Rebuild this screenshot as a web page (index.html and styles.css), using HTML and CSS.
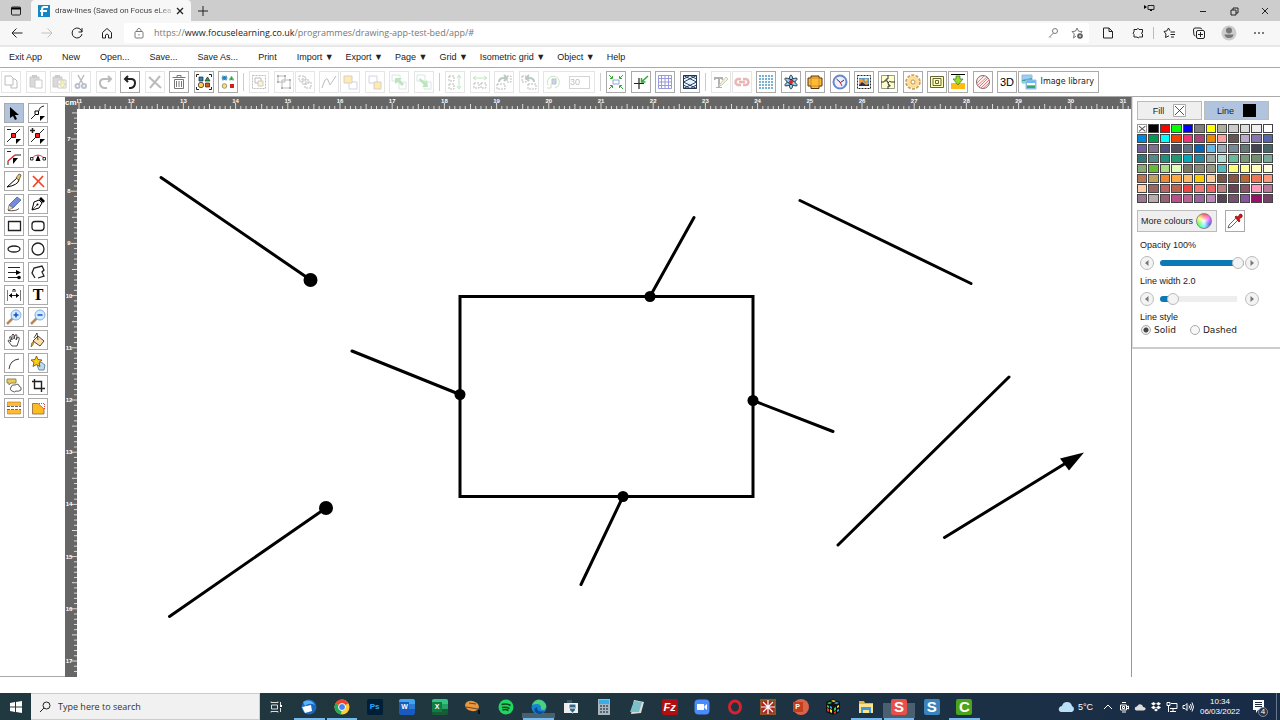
FILE: index.html
```html
<!DOCTYPE html>
<html lang="en">
<head>
<meta charset="utf-8">
<title>draw-lines (Saved on Focus eLearning)</title>
<link rel="stylesheet" href="styles.css">
</head>
<body>
<header class="browser">
  <div class="tabs">
    <button class="plain tab-actions" aria-label="Tab actions"><svg class="i12" viewBox="0 0 12 12"><rect x="1.5" y="2" width="9" height="8" rx="1" class="ln"/><path d="M1.5 2.5h9v2h-9z"/></svg></button>
    <div class="tab">
      <svg class="i12" viewBox="0 0 12 12"><path fill="#1687c4" d="M0 0h12v12H0z"/><path fill="none" stroke="#fff" stroke-width="2" d="M10 2H6Q4 2 4 5v6M2 6h7"/></svg>
      <span class="tab-title">draw-lines (Saved on Focus eLea</span>
      <button class="plain" aria-label="Close tab"><svg class="i8" viewBox="0 0 8 8"><path class="ln" stroke-width="1.3" d="M1 1l6 6M7 1l-6 6"/></svg></button>
    </div>
    <button class="plain new-tab" aria-label="New tab"><svg class="i12" viewBox="0 0 12 12"><path class="ln" d="M6 1v10M1 6h10"/></svg></button>
    <div class="window-controls">
      <svg class="i12 cast" viewBox="0 0 12 12"><path d="M1 4l3 2-3 2zM7 8h2v2H7z"/><path class="ln" d="M5 4.500h6v4H5z"/></svg>
      <button class="plain" aria-label="Minimise"><svg class="i12" viewBox="0 0 12 12"><path class="ln" d="M3 6.500h6"/></svg></button>
      <button class="plain" aria-label="Restore"><svg class="i12" viewBox="0 0 12 12"><path class="ln" d="M3 5h5v5H3zM5 5V3h5v5H8"/></svg></button>
      <button class="plain" aria-label="Close"><svg class="i12" viewBox="0 0 12 12"><path class="ln" d="M3 3l6 6M9 3L3 9"/></svg></button>
    </div>
  </div>
  <nav class="address-row" aria-label="Navigation">
    <div class="nav-buttons">
      <button class="plain" aria-label="Back"><svg class="i12" viewBox="0 0 12 12"><path class="ln" d="M11.500 6H1M5.500 1.500L1 6l4.500 4.500"/></svg></button>
      <button class="plain faded" aria-label="Forward" disabled><svg class="i12" viewBox="0 0 12 12"><path class="ln" d="M.5 6H11M6.500 1.500L11 6l-4.500 4.500"/></svg></button>
      <button class="plain" aria-label="Refresh"><svg class="i12" viewBox="0 0 12 12"><path class="ln" d="M11 5A5 5 0 1 0 11 7M11 1v4H7.500"/></svg></button>
      <button class="plain" aria-label="Home"><svg class="i12" viewBox="0 0 12 12"><path class="ln" d="M1.500 5.500L6 1.500l4.500 4v5.500H7.500V8q-1.500-2-3 0v3h-3z"/></svg></button>
    </div>
    <div class="address">
      <svg class="i12 dim" viewBox="0 0 12 12"><rect x="2" y="4.500" width="8" height="6.500" rx="1" class="ln"/><path class="ln" d="M4 4.500V3q2-3.500 4 0v1.500M6 7v1.500"/></svg>
      <a class="url" href="#">https://<span class="host">www.focuselearning.co.uk</span>/programmes/drawing-app-test-bed/app/#</a>
      <svg class="i12 dim" viewBox="0 0 12 12"><circle cx="8" cy="4" r="2.500" class="ln"/><path class="ln" d="M6.500 6L2 10.500M3 9.500l1 1"/></svg>
      <svg class="i12" viewBox="0 0 12 12"><path fill="none" stroke="#777" d="M5 9L2.500 11l.8-4L1 4.500l3.500-.3L6 1l1.500 3.200 3.500.3-1 1.500"/><circle cx="9" cy="9" r="2.800" fill="#555"/><path d="M7.700 9h2.600M9 7.700v2.600" stroke="#fff" stroke-width=".7"/></svg>
    </div>
    <div class="extras">
      <button class="plain" aria-label="Reader"><svg class="i12" viewBox="0 0 12 12"><path class="ln" d="M1.500 1H7l3.500 3.500V11h-9zM7 1v3.500h3.500"/></svg></button>
      <button class="plain" aria-label="Extensions"><svg class="i12" viewBox="0 0 12 12"><path class="ln" d="M2 2.500h3Q6 0 7 2.500h3.500v3Q8 6 10.500 7v3H7.500Q6 12 5 10H2V7.500Q0 6 2 5z"/></svg></button>
      <i class="rule"></i>
      <button class="plain" aria-label="Favourites"><svg class="i12" viewBox="0 0 12 12"><path class="ln" d="M7.500 5H12M7.500 7.500H12M8 10h3M7 3.800L5.500 1 4 3.800 1 4.500 3 7l-.5 3.500L6 8.800"/></svg></button>
      <button class="plain" aria-label="Collections"><svg class="i12" viewBox="0 0 12 12"><rect x="3.500" y="3.500" width="8" height="8" rx="1.500" class="ln"/><path class="ln" d="M2.500 9Q1 9 .8 7L.5 3Q.5 1 2 1h5q1.500 0 2 1.500M7.500 5v5M5 7.500h5"/></svg></button>
      <button class="plain" aria-label="Profile"><svg class="i16" viewBox="0 0 16 16"><circle cx="8" cy="8" r="7.500" fill="#ccc"/><circle cx="8" cy="5.500" r="3" fill="#777"/><path fill="#777" d="M3.500 9.500h9Q12 13 8 13T3.500 9.500z"/></svg></button>
      <button class="plain" aria-label="Settings and more"><svg class="i12" viewBox="0 0 12 12"><path d="M1 5.500h2v1H1zM5 5.500h2v1H5zM9 5.500h2v1H9z"/></svg></button>
    </div>
  </nav>
</header>

<nav class="menu" aria-label="Application menu">
  <button>Exit App</button><button>New</button><button>Open...</button><button>Save...</button><button>Save As...</button><button>Print</button>
  <button class="drop">Import ▼</button><button class="drop">Export ▼</button><button class="drop">Page ▼</button><button class="drop">Grid ▼</button><button class="drop">Isometric grid ▼</button><button class="drop">Object ▼</button><button>Help</button>
</nav>

<div class="toolbar" role="toolbar" aria-label="Edit tools">
  <div class="group group-edit">
    <button class="tool off" aria-label="Copy"><svg class="i16" viewBox="0 0 16 16"><path class="ln" d="M2 2h6l2 2v7H2zM8 11v3h6V7l-2-2h-2"/></svg></button>
    <button class="tool off" aria-label="Paste"><svg class="i16" viewBox="0 0 16 16"><path fill="#888" stroke="#555" d="M2 3h9v10H2z"/><path fill="#555" d="M4 1h5v3H4z"/><path fill="#fff" stroke="#555" d="M7 6h7v8H7z"/></svg></button>
    <div class="pair">
      <button class="tool off" aria-label="Paste in place"><svg class="i16" viewBox="0 0 16 16"><path fill="#888" stroke="#555" d="M1 3h9v10H1z"/><path fill="#555" d="M3 1h5v3H3z"/><path fill="#fff" stroke="#555" d="M6 6h8v8H6z"/><path fill="#dd2" stroke="#772" d="M9 6h3v4h2l-3.500 4L7 10h2z"/></svg></button>
      <button class="tool off" aria-label="Cut"><svg class="i16" viewBox="0 0 16 16"><path class="ln" stroke-width="1.500" d="M5 1l5 9M11 1L6 10"/><g fill="none" stroke="#236" stroke-width="2"><circle cx="4.500" cy="12" r="2"/><circle cx="11" cy="12" r="2"/></g></svg></button>
    </div>
    <button class="tool off" aria-label="Redo"><svg class="i16" viewBox="0 0 16 16"><path class="ln" stroke-width="2" d="M9 14H6Q2 13 2 9t4-4h7M10 2l3 3-3 3"/></svg></button>
    <button class="tool" aria-label="Undo"><svg class="i16" viewBox="0 0 16 16"><path class="ln" stroke-width="2" d="M7 14h2q4-1 4-5t-4-4H3M6 2L3 5l3 3"/></svg></button>
    <button class="tool off" aria-label="Delete"><svg class="i16" viewBox="0 0 16 16"><path class="ln" stroke-width="2" d="M2 3l12 11M13 2L3 14"/></svg></button>
    <button class="tool" aria-label="Clear all"><svg class="i16" viewBox="0 0 16 16"><path class="grey" d="M3.500 5.500h9v9h-9zM1.500 3.500h13M6 3V1.500h4V3M5.500 7v6M8 7v6M10.500 7v6"/></svg></button>
    <button class="tool" aria-label="Select all"><svg class="i16" viewBox="0 0 16 16"><path class="ln" d="M.5 3V.5H3M13 .5h2.500V3M15.500 13v2.500H13M3 15.500H.5V13"/><path fill="#28b" stroke="#222" stroke-width=".7" d="M3 3h4v4H3z"/><path fill="#2a4" stroke="#222" stroke-width=".7" d="M9 7h5l-2.500-4z"/><circle cx="5" cy="11" r="2.700" fill="#fc5" stroke="#222" stroke-width=".7"/><path fill="#d51" stroke="#222" stroke-width=".7" d="M9.500 9h4v4h-4z"/></svg></button>
    <button class="tool" aria-label="Deselect all"><svg class="i16" viewBox="0 0 16 16"><path fill="#28b" stroke="#9bc" stroke-dasharray="2 1" d="M2 2h5v4H2z"/><path fill="#2a4" stroke="#9b9" stroke-dasharray="2 1" d="M9 6h5l-2.500-4z"/><circle cx="4.500" cy="12" r="2.300" fill="#fd7" stroke="#997"/><path fill="#c22" d="M10 10h4v4h-4z"/></svg></button>
  </div>
  <i class="divider"></i>
  <div class="group group-arrange">
    <button class="tool off" aria-label="Group"><svg class="i16" viewBox="0 0 16 16"><path class="ln" d="M1.500 1.500h13v13h-13z" stroke-dasharray="2 1"/><path class="ln" d="M4 4h6v5H4z"/><path fill="#fd5" stroke="#555" d="M7 7h5v5H7z"/></svg></button>
    <div class="pair">
      <button class="tool off" aria-label="Ungroup"><svg class="i16" viewBox="0 0 16 16"><path class="ln" d="M2 2h7v6H2zM6 6h8v8H6z"/><path d="M1 1h2v2H1zM8 1h2v2H8zM1 7h2v2H1zM13 5h2v2h-2zM5 13h2v2H5zM13 13h2v2h-2z"/></svg></button>
      <button class="tool off" aria-label="Ungroup all"><svg class="i16" viewBox="0 0 16 16"><path class="ln" stroke-dasharray="2 1" d="M2 2h6v5H2zM5 5h6v5H5zM8 8h6v6H8z"/></svg></button>
    </div>
    <div class="pair">
      <button class="tool off" aria-label="Smooth"><svg class="i16" viewBox="0 0 16 16"><path class="ln" d="M1 14Q5 1 7 6t2 5 6-9"/></svg></button>
      <button class="tool off" aria-label="Bring to front"><svg class="i16" viewBox="0 0 16 16"><path fill="#fff" stroke="#67a" d="M7 8h8v7H7z"/><path fill="#fb1" stroke="#862" d="M2 2h8v7H2z"/></svg></button>
    </div>
    <button class="tool off" aria-label="Send to back"><svg class="i16" viewBox="0 0 16 16"><path fill="#fff" stroke="#67a" d="M2 2h8v7H2z"/><path fill="#fb1" stroke="#862" d="M7 8h7v7H7z"/></svg></button>
    <button class="tool off" aria-label="Forward one"><svg class="i16" viewBox="0 0 16 16"><path fill="#fff" stroke="#8ab" d="M1 1h8v6H1zM8 8h7v7H8z"/><path fill="#2a2" d="M4 4h7L9 6l4 4-2 2-4-4-3 2z"/></svg></button>
    <button class="tool off" aria-label="Back one"><svg class="i16" viewBox="0 0 16 16"><path fill="#fff" stroke="#8ab" d="M1 1h8v6H1zM8 8h7v7H8z"/><path fill="#2a2" d="M4 4l5 4 2-2 1 7H6l2-2-5-5z"/></svg></button>
  </div>
  <i class="divider"></i>
  <div class="group group-rotate">
    <button class="tool off" aria-label="Flip vertical"><svg class="i16" viewBox="0 0 16 16"><path class="ln" d="M2 2h5v5H2zM2 10h5v5H2z" stroke-dasharray="2 1"/><path class="green" d="M12 2v12M10 4l2-3 2 3M10 12l2 3 2-3"/></svg></button>
    <button class="tool off" aria-label="Flip horizontal"><svg class="i16" viewBox="0 0 16 16"><path class="ln" d="M2 9h5v5H2zM9 9h5v5H9z" stroke-dasharray="2 1"/><path class="green" d="M2 4h12M4 2L1 4l3 2M12 2l3 2-3 2"/></svg></button>
    <button class="tool off" aria-label="Rotate right"><svg class="i16" viewBox="0 0 16 16"><path class="ln" d="M1 10h8v5H1zM11 2h4v6h-4z" stroke-dasharray="2 1"/><path fill="none" stroke="#253" stroke-width="2" d="M3 8Q3 4 8 4h3M8 1l3 3-3 3"/></svg></button>
    <button class="tool off" aria-label="Rotate left"><svg class="i16" viewBox="0 0 16 16"><path class="ln" d="M7 10h8v5H7zM1 2h4v6H1z" stroke-dasharray="2 1"/><path fill="none" stroke="#253" stroke-width="2" d="M13 8q0-4-5-4H5M8 1L5 4l3 3"/></svg></button>
    <div class="rotate off"><svg class="i16" viewBox="0 0 16 16"><path class="green" d="M2 11A6 6 0 1 1 9 14M1 14h4v-4"/><path fill="#57b" stroke="#333" d="M6 5h4v5H6z"/></svg><input aria-label="Rotation angle" value="30" disabled></div>
  </div>
  <i class="divider"></i>
  <div class="group group-view">
    <button class="tool" aria-label="Fit to page"><svg class="i16" viewBox="0 0 16 16"><path fill="none" stroke="#8ad" d="M5 6h6v4H5z"/><path class="green" stroke-width="1" d="M1 1l3 3M4.500 2v2.500H2M15 1l-3 3M11.500 2v2.500H14M1 15l3-3M2 11.500h2.500V14M15 15l-3-3M14 11.500h-2.500V14"/></svg></button>
    <button class="tool" aria-label="Snap to point"><svg class="i16" viewBox="0 0 16 16"><path class="ln" stroke-width="1.200" d="M6 4v11M1 9.500h10"/><path class="green" stroke-width="1.500" d="M15 2L8.500 8M8.500 4v4h4"/></svg></button>
    <button class="tool" aria-label="Grid"><svg class="i16" viewBox="0 0 16 16"><path fill="none" stroke="#99d" d="M1.500 1.500h13v13h-13zM4.500 1v14M8 1v14M11.500 1v14M1 4.500h14M1 8h14M1 11.500h14"/></svg></button>
    <button class="tool" aria-label="Isometric grid"><svg class="i16" viewBox="0 0 16 16"><path fill="#e4f6fb" stroke="#235" d="M1.500 1.500h13v13h-13z"/><path fill="none" stroke="#235" stroke-width=".9" d="M1.500 1.500l13 6.500-13 6.500M14.500 1.500L1.500 8l13 6.500M1.500 5L8 1.500 14.500 5M1.500 11L8 14.500l6.500-3.500"/></svg></button>
  </div>
  <i class="divider"></i>
  <div class="group group-objects">
    <div class="pair">
      <button class="tool off" aria-label="Edit text"><svg class="i16" viewBox="0 0 16 16"><path d="M1 3h9v3H9L8 5H7v8h2v1H3v-1h2V5H3L2 6H1z"/><path fill="#dd7" stroke="#552" d="M7 10l6-7 2 2-6 6-3 1z"/></svg></button>
      <button class="tool off" aria-label="Link"><svg class="i16" viewBox="0 0 16 16"><path fill="none" stroke="#b11" stroke-width="2.500" d="M7 5H4.500a3 3 0 0 0 0 6H7M9 5h2.500a3 3 0 0 1 0 6H9M5 8h6"/></svg></button>
    </div>
    <button class="tool" aria-label="Dot grid"><svg class="i16" viewBox="0 0 16 16"><path fill="none" stroke="#7ab0d4" stroke-width="2" stroke-dasharray="2 1" d="M1 2h14M1 5h14M1 8h14M1 11h14M1 14h14"/></svg></button>
    <button class="tool" aria-label="Flower"><svg class="i16" viewBox="0 0 16 16"><g fill="#9cf" stroke="#122" stroke-width=".8"><ellipse cx="8" cy="8" rx="2" ry="7"/><ellipse cx="8" cy="8" rx="2" ry="7" transform="rotate(60 8 8)"/><ellipse cx="8" cy="8" rx="2" ry="7" transform="rotate(120 8 8)"/></g><circle cx="8" cy="8" r="2" fill="#d22"/></svg></button>
    <button class="tool" aria-label="Union"><svg class="i16" viewBox="0 0 16 16"><path fill="#fb3" stroke="#531" d="M4 2h8v2h3v8h-3v2.500H4V12H1V4h3z"/><path fill="none" stroke="#c83" d="M4 4h8v8H4z"/></svg></button>
    <button class="tool" aria-label="Clock"><svg class="i16" viewBox="0 0 16 16"><circle cx="8" cy="8" r="6.500" fill="#eef" stroke="#68c" stroke-width="2"/><path fill="none" stroke="#235" d="M4.500 5l4 3.500L12 6"/><path stroke="#d22" d="M8 8l2 4"/></svg></button>
    <button class="tool" aria-label="Picture"><svg class="i16" viewBox="0 0 16 16"><path class="ln" stroke-dasharray="2 1" d="M1.500 1.500h13v13h-13z"/><path fill="#59d" d="M3 4h10v8H3z"/><path fill="#f93" d="M3 5h3l3 4 2-1 2 2v2H3z"/><circle cx="10" cy="6" r="1.500" fill="#fc3"/><path fill="#235" d="M3 11l3-3 4 3 3-1v2H3z"/></svg></button>
    <button class="tool" aria-label="Jigsaw"><svg class="i16" viewBox="0 0 16 16"><path fill="#ffc" stroke="#998" d="M1.500 1.500h13v13h-13z"/><path class="ln" stroke-width=".9" d="M8 1v4q-3-1-2 2 2-1 2 2t2 2q1 2-2 1v3M1 8h3q0-2 2-1M8 9q2-3 3-1h4"/></svg></button>
    <button class="tool" aria-label="Gear"><svg class="i16" viewBox="0 0 16 16"><circle cx="8" cy="8" r="6.800" fill="none" stroke="#c9a25c" stroke-width="2" stroke-dasharray="3 1.300"/><circle cx="8" cy="8" r="6" fill="#fd9"/><circle cx="8" cy="8" r="2" fill="#fff" stroke="#b95"/></svg></button>
    <div class="pair">
      <button class="tool" aria-label="Offset"><svg class="i16" viewBox="0 0 16 16"><path fill="#ffb" stroke="#663" d="M1.500 2.500h13v11h-13zM4 4.500h8v7H4zM6.500 6.500h3v3h-3z"/></svg></button>
      <button class="tool" aria-label="Download"><svg class="i16" viewBox="0 0 16 16"><path d="M1 0h14v1H1z"/><path fill="#fb1" d="M1 9h14v6H1z"/><path fill="#9d2" stroke="#372" stroke-width=".7" d="M6 2h4v3h3l-5 6-5-6h3z"/></svg></button>
    </div>
    <button class="tool" aria-label="Hatching"><svg class="i16" viewBox="0 0 16 16"><circle cx="8" cy="8" r="6.500" fill="#fee" stroke="#866"/><path stroke="#d77" stroke-width=".9" d="M2 9l7-7M3 11l9-8M4 13l9-9M6 14l8-8M8 14.500L14 9"/></svg></button>
    <div class="pair">
      <button class="tool three">3D</button>
      <button class="tool library"><svg class="i16" viewBox="0 0 16 16"><path fill="#9cf" stroke="#9bc" d="M1 1h10v8H1z"/><path fill="#3a8" d="M1 6l10-2v3H1z"/><path fill="#6bf" stroke="#abc" d="M5 6h10v9H5z"/><path fill="#fff" d="M6 9h8v2H6z"/><path fill="#3a6" d="M6 12h8v2H6z"/></svg>Image library</button>
    </div>
  </div>
</div>

<main class="workspace">
  <aside class="tools" aria-label="Drawing tools">
    <div class="tool-grid">
    <button class="tool selected" aria-label="Select"><svg class="i16" viewBox="0 0 16 16"><path d="M4 2l9 8H9l2 4-2 1-2-4-3 2z"/></svg></button>
    <button class="tool" aria-label="Edit points"><svg class="i16" viewBox="0 0 16 16"><path class="ln" d="M1 14l4-4M9 6q0-4 5-5"/><path fill="#fff" stroke="#000" d="M5 6h3.500v3.500H5z"/><path d="M10 11h5l-5 5z"/></svg></button>
    <button class="tool" aria-label="Remove point"><svg class="i16" viewBox="0 0 16 16"><path class="ln" d="M1 14l5-5M9 6l5-5M1 1.500h4"/><path fill="#e22" stroke="#500" d="M5.500 5.500h4v4h-4z"/><path d="M10 11h5l-5 5z"/></svg></button>
    <button class="tool" aria-label="Add point"><svg class="i16" viewBox="0 0 16 16"><path class="ln" d="M1 14l5-5M9 6l5-5"/><path class="ln" stroke-width="1.500" d="M0 2.500h5M2.500 0v5"/><path fill="#e22" stroke="#500" d="M5.500 5.500h4v4h-4z"/><path d="M10 11h5l-5 5z"/></svg></button>
    <button class="tool" aria-label="Remove segment"><svg class="i16" viewBox="0 0 16 16"><path class="ln" d="M1 1.500h4M2 15v-4M9 5h6"/><path stroke="#d22" stroke-width="1.500" d="M2 11l7-6"/><path d="M7 8h5l-5 6z"/></svg></button>
    <button class="tool" aria-label="Curve segment"><svg class="i16" viewBox="0 0 16 16"><path fill="none" stroke="#e44" d="M2 8q6-6 12 0"/><path fill="#fff" stroke="#000" stroke-width=".8" d="M.5 7.500H3V10H.5zM13 7.500h2.500V10H13z"/><path d="M8 5l2.500 6h-5z"/></svg></button>
    <button class="tool" aria-label="Knife"><svg class="i16" viewBox="0 0 16 16"><path fill="#fff" stroke="#000" d="M1 14L11 5l2 2q-1 5-12 7z"/><path fill="#ec7" stroke="#542" stroke-width=".8" d="M10 5l3-4 2 1-2 5z"/></svg></button>
    <button class="tool" aria-label="Delete shape"><svg class="i16" viewBox="0 0 16 16"><path stroke="#e42" stroke-width="1.700" d="M3 3l11 11M13 3L3 14"/></svg></button>
    <button class="tool" aria-label="Pencil"><svg class="i16" viewBox="0 0 16 16"><path fill="#78d" stroke="#469" stroke-width=".8" d="M3 9l8-8 4 3-8 8z"/><path fill="#fdb" stroke="#654" stroke-width=".6" d="M3 9l4 3-5 2z"/><path class="ln" stroke-width=".8" d="M2 14.500q8 1 11-2"/></svg></button>
    <button class="tool" aria-label="Pen"><svg class="i16" viewBox="0 0 16 16"><path fill="#fff" stroke="#000" d="M2 14l2-8 5-2 3 3-3 5z"/><path d="M9 3l2-2 4 4-2 2z"/><path class="ln" stroke-width=".7" d="M2 14l5-5"/><circle cx="7.500" cy="8.500" r="1"/></svg></button>
    <button class="tool" aria-label="Rectangle"><svg class="i16" viewBox="0 0 16 16"><path class="ln" stroke-width="1.300" d="M2.500 3.500h12v9h-12z"/></svg></button>
    <button class="tool" aria-label="Rounded rectangle"><svg class="i16" viewBox="0 0 16 16"><rect class="ln" stroke-width="1.300" x="2" y="3.500" width="12" height="9" rx="3"/></svg></button>
    <button class="tool" aria-label="Ellipse"><svg class="i16" viewBox="0 0 16 16"><ellipse class="ln" stroke-width="1.300" cx="8" cy="8" rx="6" ry="3"/></svg></button>
    <button class="tool" aria-label="Circle"><svg class="i16" viewBox="0 0 16 16"><circle class="ln" stroke-width="1.300" cx="8" cy="8" r="6"/></svg></button>
    <button class="tool" aria-label="Line"><svg class="i16" viewBox="0 0 16 16"><path class="ln" d="M2 3.500h12M2 8.500h8M2 13.500h10"/><path d="M10 6l5 2.500-5 2.500z"/><circle cx="13" cy="13.500" r="1.800"/></svg></button>
    <button class="tool" aria-label="Polygon"><svg class="i16" viewBox="0 0 16 16"><path class="ln" stroke-width="1.300" d="M5 14L2 9l2-5 8-2 2 4-2 2 2 4-6 2"/></svg></button>
    <button class="tool" aria-label="Dimension"><svg class="i16" viewBox="0 0 16 16"><path class="grey" d="M1.500 3v11M14.500 3v11"/><path class="ln" d="M3 8.500h10M7 5V2.500h2V5"/><path d="M6 6v5L3 8.500zM10 6v5l3-2.500z"/></svg></button>
    <button class="tool text-tool" aria-label="Text">T</button>
    <button class="tool" aria-label="Zoom in"><svg class="i16" viewBox="0 0 16 16"><path stroke="#b85" stroke-width="2.500" d="M6.500 9.500L1 15"/><circle cx="10" cy="6" r="5" fill="#cef" stroke="#8ad"/><path class="blue" d="M7.500 6h5M10 3.500v5"/></svg></button>
    <button class="tool" aria-label="Zoom out"><svg class="i16" viewBox="0 0 16 16"><path stroke="#b85" stroke-width="2.500" d="M6.500 9.500L1 15"/><circle cx="10" cy="6" r="5" fill="#cef" stroke="#8ad"/><path class="blue" d="M7.500 6h5"/></svg></button>
    <button class="tool" aria-label="Pan"><svg class="i16" viewBox="0 0 16 16"><path class="ln" stroke-width=".8" d="M6 14l-4-5q0-2 3 1L3.500 5q1-2 2.500 3V3q1-2 2 0v4l1-4q2-1 2 1l-1 4 2-3q2 0 1 3l-2 6z"/></svg></button>
    <button class="tool" aria-label="Fill"><svg class="i16" viewBox="0 0 16 16"><path fill="#fda" stroke="#431" stroke-width=".9" d="M8 4l6 5-4 5-7-5z"/><path class="ln" stroke-width=".8" d="M8 8L7 1 4 6"/><path fill="#da3" stroke="#431" stroke-width=".5" d="M1 15q0-5 3-6l-1 4z"/></svg></button>
    <button class="tool" aria-label="Arc"><svg class="i16" viewBox="0 0 16 16"><path class="ln" stroke-width=".9" d="M3 14Q4 5 13 4"/></svg></button>
    <button class="tool" aria-label="Shapes"><svg class="i16" viewBox="0 0 16 16"><path fill="#bde" stroke="#68a" d="M11 7l4 3-1 5H9l-2-5z"/><path fill="#fc1" stroke="#642" stroke-width=".8" d="M6.500 1L8 4.500l4 .5-3 2.500 1 4-3.500-2-3.500 2 1-4L1 5l4-.5z"/></svg></button>
    <button class="tool" aria-label="Callouts"><svg class="i16" viewBox="0 0 16 16"><path fill="#eec85a" stroke="#885" d="M1 2h9v4H5L3 8V6H1z"/><path fill="#fff" stroke="#333" stroke-width=".8" d="M6 14q-3-1-1-4 1-3 4-2 4-2 4 1 3 1 2 4-3 2-5 1-1 2-4 0z"/></svg></button>
    <button class="tool" aria-label="Crop"><svg class="i16" viewBox="0 0 16 16"><path class="ln" stroke-width="1.400" d="M2 4.500h9.500V15M4.500 2v9.500H15"/></svg></button>
    <button class="tool" aria-label="Cut across"><svg class="i16" viewBox="0 0 16 16"><path fill="#fb3" stroke="#a73" stroke-width=".6" d="M1.500 2h13v12h-13z"/><path fill="#fff" d="M1 6h14v4H1z"/><path fill="none" stroke="#666" stroke-dasharray="3 1" d="M1 6.500h14M1 9.500h14"/></svg></button>
    <button class="tool" aria-label="Chamfer"><svg class="i16" viewBox="0 0 16 16"><path fill="#fb2" stroke="#863" stroke-width=".8" d="M2.500 3.500H8L14 9v5H2.500z"/><path fill="none" stroke="#d44" stroke-dasharray="1 1" d="M9 3.500h5.500V9"/></svg></button>
    </div>
  </aside>

  <section class="drawing" aria-label="Drawing page">
    <div class="ruler-top"><span class="unit">cm</span><svg id="ruler-x"></svg></div>
    <div class="sheet-row">
      <svg id="ruler-y"></svg>
      <svg class="sheet" role="img" aria-label="Lines and a rectangle">
        <g transform="translate(-77 -109)" class="shapes">
          <path d="M460 296.500h293v200H460zM161 177.500l149 102M169.500 616.500L326 508M694 217.500l-44 79M352 351l108 43.500M753 400.500l80 31M581 584.500l42-88M800 200.500l171 83M838 545l171-168M944.500 537.500L1066 463"/>
          <path class="solid" d="M1084 452.500l-24 6 9 12z"/>
          <g class="solid"><circle cx="310.500" cy="280" r="7"/><circle cx="326" cy="508" r="7"/><circle cx="650" cy="296.500" r="5.500"/><circle cx="460" cy="394.500" r="5.500"/><circle cx="753" cy="400.500" r="5.500"/><circle cx="623" cy="496.500" r="5.500"/></g>
        </g>
      </svg>
    </div>
  </section>

  <aside class="side">
    <div class="panel">
      <div class="modes">
        <button>Fill<svg class="mode-chip" viewBox="0 0 13 13"><path fill="#fff" stroke="#aaa" d="M.5.5h12v12H.5z"/><path class="ln" stroke-width=".8" d="M2 2l9 9M11 2l-9 9"/></svg></button>
        <button class="selected">Line<svg class="mode-chip" viewBox="0 0 13 13"><path d="M0 0h13v13H0z"/></svg></button>
      </div>
      <div class="swatches" id="swatches"></div>
      <div class="more">
        <button class="more-button">More colours<i class="wheel"></i></button>
        <button class="picker" aria-label="Pick colour"><svg class="i16" viewBox="0 0 16 16"><path fill="#fff" stroke="#444" stroke-width=".8" d="M1 15l1-3 7-7 2 2-7 7z"/><path fill="#d11" stroke="#811" stroke-width=".8" d="M8 4l1-1 2 1 2-3q3 0 2 3l-3 2 1 2-1 1z"/></svg></button>
      </div>
      <label for="opacity">Opacity 100%</label>
      <div class="slider">
        <button class="step" aria-label="Less opacity"><svg viewBox="0 0 6 6"><path fill="#777" d="M4.500 0v6L1 3z"/></svg></button>
        <input class="full" id="opacity" type="range" min="0" max="100" value="100">
        <button class="step" aria-label="More opacity"><svg viewBox="0 0 6 6"><path fill="#777" d="M1.500 0v6L5 3z"/></svg></button>
      </div>
      <label for="width">Line width 2.0</label>
      <div class="slider">
        <button class="step" aria-label="Thinner"><svg viewBox="0 0 6 6"><path fill="#777" d="M4.500 0v6L1 3z"/></svg></button>
        <input class="low" id="width" type="range" min="0" max="20" value="2">
        <button class="step" aria-label="Thicker"><svg viewBox="0 0 6 6"><path fill="#777" d="M1.500 0v6L5 3z"/></svg></button>
      </div>
      <div class="style-title" id="style-title">Line style</div>
      <div class="radios" role="radiogroup" aria-labelledby="style-title">
        <label><input type="radio" name="dash" checked>Solid</label>
        <label><input type="radio" name="dash">Dashed</label>
      </div>
    </div>
  </aside>
</main>

<footer class="taskbar">
  <button class="plain start" aria-label="Start"><svg class="i12" viewBox="0 0 12 12"><path fill="#fff" d="M0 2l5-1v4.500H0zM6 1l6-1v5.500H6zM0 6.500h5V11l-5-1zM6 6.500h6V12l-6-1z"/></svg></button>
  <div class="search">
    <svg class="i12" viewBox="0 0 12 12"><circle class="ln" cx="7.500" cy="4.500" r="3.500"/><path class="ln" d="M5 7L1 11"/></svg>
    <input type="text" aria-label="Search" placeholder="Type here to search">
  </div>
  <div class="apps">
    <button class="app" aria-label="Task view"><svg class="i12" viewBox="0 0 12 12"><path fill="none" stroke="#ddd" d="M1 1.500V.5M1 1.500h7V.5M1.500 4h6v4h-6zM1 11.500v-1h7v1M10.500 1v3M10.500 7v4"/><path fill="#fff" d="M10 4h2v2h-2z"/></svg></button>
    <button class="app open" aria-label="Thunderbird"><svg class="i16" viewBox="0 0 16 16"><circle cx="8" cy="8" r="7.500" fill="#1d66c1"/><path fill="#5bb5f5" d="M2 3q7-4 12 3-6-3-10 1z"/><path fill="#fff" d="M1 8l9-2 1 6-7 2z"/></svg></button>
    <button class="app open" aria-label="Chrome"><svg class="i16" viewBox="0 0 16 16"><circle cx="8" cy="8" r="7.500" fill="#fc3"/><path fill="#e43" d="M8 8L1.500 4.300A7.500 7.500 0 0 1 14.500 4.300z"/><path fill="#2a5" d="M8 8l-6.500-3.700A7.500 7.500 0 0 0 7 15.400z"/><circle cx="8" cy="8" r="3.500" fill="#48e" stroke="#fff"/></svg></button>
    <button class="app" aria-label="Photoshop"><span class="logo ps">Ps</span></button>
    <button class="app" aria-label="Word"><span class="logo word"><b>W</b></span></button>
    <button class="app" aria-label="Excel"><span class="logo excel"><b>X</b></span></button>
    <button class="app" aria-label="Editor"><svg class="i16" viewBox="0 0 16 16"><ellipse cx="7" cy="7" rx="7" ry="5" fill="#e9983d" transform="rotate(15 7 7)"/><path stroke="#643" fill="none" d="M1 8l12 2M4 4l7 1"/><path stroke="#111" stroke-width="2" d="M14 11v4"/></svg></button>
    <button class="app" aria-label="Spotify"><svg class="i16" viewBox="0 0 16 16"><circle cx="8" cy="8" r="7.500" fill="#1ed760"/><path fill="none" stroke="#142" stroke-width="1.500" d="M3.500 5.500q5-1.500 9 1M4 8.500q4-1 7.500 1M4.500 11q3-1 6 .5"/></svg></button>
    <button class="app open current-edge" aria-label="Edge"><svg class="i16" viewBox="0 0 16 16"><circle cx="8" cy="8" r="7.500" fill="#1683d5"/><path fill="#4bd07b" d="M1 6Q5-2 12 2q6 5 1 9-4 0-3-3Q9 3 1 6z"/><path fill="#0d4b93" d="M6 8q0 6 8 4-4 5-9 2-4-4 1-6z"/></svg></button>
    <button class="app" aria-label="Security"><svg class="i16" viewBox="0 0 16 16"><path fill="#eee" d="M1 4h14v10H1z"/><path fill="#456" d="M4 1h5v3H4z"/><path fill="#368" stroke="#fff" d="M6 5h7v4q0 3-3.500 5Q6 12 6 9z"/><path stroke="#fff" d="M7 9h5"/></svg></button>
    <button class="app" aria-label="Calculator"><svg class="i16" viewBox="0 0 16 16"><path fill="#aab5bd" d="M2 0h12v16H2z"/><path fill="#38aee8" d="M3 1h10v4H3z"/><path stroke="#567" stroke-width="2" stroke-dasharray="2 1" d="M4 7h9M4 10h9M4 13h9"/></svg></button>
    <button class="app" aria-label="Notes"><svg class="i16" viewBox="0 0 16 16"><path fill="#ddd" d="M5 1l10 2-3 11-10 1z"/><path fill="#7bbfc9" d="M5 2l8 1-3 10H1z"/></svg></button>
    <button class="app" aria-label="FileZilla"><span class="logo fz">Fz</span></button>
    <button class="app" aria-label="Zoom"><svg class="i16" viewBox="0 0 16 16"><rect x=".5" y=".5" width="15" height="15" rx="4" fill="#4a8cff"/><path fill="#fff" d="M3 5h7v6H3zM10.500 7L13 5v6l-2.500-2z"/></svg></button>
    <button class="app" aria-label="Opera"><svg class="i16" viewBox="0 0 16 16"><ellipse cx="8" cy="8" rx="5.500" ry="6" fill="none" stroke="#d8232e" stroke-width="3"/></svg></button>
    <button class="app" aria-label="Snowflake"><svg class="i16" viewBox="0 0 16 16"><path fill="#852" d="M0 0h16v16H0z"/><path fill="#a22" d="M2 2h12v12H2z"/><path stroke="#fff" stroke-width="1.200" d="M8 1v14M1 8h14M3 3l10 10M13 3L3 13"/></svg></button>
    <button class="app" aria-label="PowerPoint"><span class="logo ppt"><b>P</b></span></button>
    <button class="app" aria-label="Cube"><svg class="i16" viewBox="0 0 16 16"><path fill="#111" d="M8 0l7 3v10l-7 3-7-3V3z"/><path fill="#3c5" d="M2 4l3-1 2 1-3 1zM2 6l2 1v2L2 8zM9 9l2-1v3l-2 1z"/><path fill="#fd3" d="M8 1l3 1-2 1-3-1zM5 10l2 1v3l-2-1zM12 7l2-1v2l-2 1z"/><path fill="#3ae" d="M5 7l2 1v2L5 9zM12 11l2-1v2l-2 1zM9 4l3-1 2 1-3 1z"/><path fill="#e33" d="M2 9l2 1v3l-2-1zM9 13l2-1v2l-2 1z"/></svg></button>
    <button class="app open" aria-label="File Explorer"><svg class="i16" viewBox="0 0 16 16"><path fill="#e8b33b" d="M1 2h5l1 2h8v10H1z"/><path fill="#ffe28a" d="M1 5h14v9H1z"/><path fill="#3a9be0" d="M3 8h10v6h-2v-3H5v3H3z"/></svg></button>
    <button class="app open current" aria-label="Snagit"><span class="logo snag">S</span></button>
    <button class="app" aria-label="Snagit Editor"><span class="logo snag-blue">S</span></button>
    <button class="app open" aria-label="Camtasia"><span class="logo cam">C</span></button>
  </div>
  <div class="tray">
    <svg class="i16" viewBox="0 0 16 16"><path fill="#b9e0f7" d="M3 13q-3-1-2-4 1-2 3-2 1-4 5-4t5 4q2 1 2 3t-2 3z"/></svg>
    <span class="temp">5°C</span>
    <svg class="i12" viewBox="0 0 12 12"><path class="lw" d="M2 8l4-4 4 4"/></svg>
    <svg class="i12" viewBox="0 0 12 12"><path class="lw" d="M4 1.500h4M4 11h4M2.500 4h6v5h-6zM8.500 6l2-1v3l-2-1M4.500 5.500h2v2h-2z"/></svg>
    <svg class="i12" viewBox="0 0 12 12"><path fill="#ddd" d="M2 9.500q-2-1-1-3 1-1 2-1Q5 2 8 4q1 1 1 2 3 0 2.500 2.500l-1.500 1z"/></svg>
    <svg class="i12" viewBox="0 0 12 12"><path fill="#fff" d="M3.500 1L6 2.800 3.500 4.500 1 2.800zM8.500 1L11 2.800 8.500 4.500 6 2.800zM3.500 4.800L6 6.500 3.500 8.300 1 6.500zM8.500 4.800L11 6.500 8.500 8.300 6 6.500zM6 7.500l2 1.500-2 1.500L4 9z"/></svg>
    <svg class="i12" viewBox="0 0 12 12"><path class="lw" d="M5 2.500h6v5H4M7 8v2M4 10.500h6M1 1.500h3v3H1zM2.500 4.500V11"/></svg>
    <svg class="i12" viewBox="0 0 12 12"><path class="lw" d="M1 4.500h2l2-2v7l-2-2H1zM7 4.500q1 1.500 0 3M8.500 3q2 3 0 6M10 1.500q3 4.500 0 9"/></svg>
    <time class="clock"><span>10:34</span><span>06/03/2022</span></time>
    <button class="plain notes" aria-label="4 notifications"><svg class="i16" viewBox="0 0 16 16"><path fill="#fff" d="M2 1h11v10H7l-2 3v-3H2z"/><path stroke="#1a2a42" d="M4 3.500h7M4 5.500h7M4 7.500h7"/></svg><span class="count">4</span></button>
  </div>
</footer>
<script src="app.js"></script>
</body>
</html>
```
FILE: app.js
```js
const NS = 'http://www.w3.org/2000/svg';
const CM = 52.2;

function add(parent, name, attrs, text) {
  const node = document.createElementNS(NS, name);
  for (const key in attrs) node.setAttribute(key, attrs[key]);
  if (text) node.textContent = text;
  parent.appendChild(node);
}

function ruler(id, first, offset, last, vertical) {
  const svg = document.getElementById(id);
  let d = '';
  for (let n = -10; n <= (last - first) * 10 + 2; n++) {
    const p = offset + n * CM / 10;
    if (p < 0) continue;
    const len = n % 10 === 0 ? 6 : n % 5 === 0 ? 5 : 3;
    d += vertical ? `M12 ${p}h${-len}` : `M${p} 12v${-len}`;
  }
  add(svg, 'path', { d });
  for (let c = first; c <= last; c++) {
    const p = offset + (c - first) * CM;
    add(svg, 'text', vertical ? { x: 4, y: p + 2 } : { x: p, y: 6 }, String(c));
  }
}
ruler('ruler-x', 11, 2, 31, false);
ruler('ruler-y', 7, 30, 17, true);

const colours = `none 000 f00 0f0 00f 808080 ff0 b0b0a0 ccc ddd eee fff
08d 095 0ff e40 e37 a47 e80 ff9f9f 655 bac 87a 56a
7060a0 807090 505080 505060 607080 06b 6be 9ab 789 677 445 466
377 588 229080 229970 0ab 2288a0 99aaa0 b0ddd0 6b9 797 709070 7a9
8a7 6b3 ad8 dfb 776 887 999980 5bb ff7 ff9 ffb ffd
b75 c0a060 e83 fa4 fb6 fc0 fc9 754 854 b63 e75 f97
fca 966 b66 b65 e44 e77 e66 bb8080 645 856 f9b b79
997790 bbaab0 996077 bb5088 bb6090 9a60a0 b8b 545 775070 8855a0 916 774066`.split(/\s+/);
const box = document.getElementById('swatches');
for (const c of colours) {
  const b = document.createElement('button');
  b.setAttribute('aria-label', c === 'none' ? 'No colour' : '#' + c);
  if (c === 'none') {
    b.className = 'none';
    b.innerHTML = '<svg viewBox="0 0 8 7"><path stroke="#555" d="M1 1l6 5M7 1L1 6"/></svg>';
  } else b.style.background = '#' + c;
  box.appendChild(b);
}
```
FILE: styles.css
```css
* { box-sizing: border-box; }
body {
  margin: 0;
  height: 100vh;
  display: flex;
  flex-direction: column;
  overflow: hidden;
  background: #fff;
  color: #222;
  font: 9px/12px "Liberation Sans", Arial, sans-serif;
}
button, input { font: inherit; color: inherit; margin: 0; padding: 0; }
svg { display: block; flex: none; }
.i8 { width: 8px; height: 8px; }
.i12 { width: 12px; height: 12px; }
.i16 { width: 16px; height: 16px; }
.ln { fill: none; stroke: #222; }
.grey { fill: none; stroke: #777; }
.lw { fill: none; stroke: #fff; }
.green { fill: none; stroke: #3a3; }
.blue { fill: none; stroke: #24c; stroke-width: 1.5; }
.plain { border: 0; background: none; display: grid; place-items: center; }

.tabs { height: 21px; display: flex; background: #cdcdcd; }
.tab-actions { width: 31px; }
.tab {
  width: 160px;
  padding: 0 7px;
  display: flex;
  align-items: center;
  gap: 5px;
  background: #f7f7f7;
  border-radius: 4px 4px 0 0;
  font: 8px/12px Roboto, sans-serif;
}
.tab-title {
  flex: 1;
  white-space: nowrap;
  color: #444;
  -webkit-mask-image: linear-gradient(90deg, #000 88%, #0004);
}
.new-tab { width: 24px; }
.window-controls { margin-left: auto; display: flex; }
.window-controls button { width: 31px; }
.cast { margin: 1px 32px 0 0; }
.address-row {
  height: 26px;
  display: flex;
  align-items: center;
  background: #f7f7f7;
  border-bottom: 2px solid #e8e8e8;
}
.nav-buttons { display: flex; width: 124px; padding-left: 2px; }
.nav-buttons button { width: 30px; }
.faded { opacity: .25; }
.address {
  flex: 1;
  height: 20px;
  padding: 0 6px 0 9px;
  display: flex;
  align-items: center;
  gap: 12px;
  background: #fff;
  border-radius: 2px;
}
.url {
  flex: 1;
  margin-left: -3px;
  color: #777;
  text-decoration: none;
  font: 9px/12px "Open Sans", sans-serif;
}
.host { color: #222; }
.dim { opacity: .6; }
.extras { display: flex; align-items: center; width: 191px; padding-left: 4px; }
.extras button { width: 30px; }
.rule { width: 1px; height: 12px; background: #bbb; }

.menu {
  height: 21px;
  padding-left: 9px;
  display: flex;
  align-items: center;
  border-bottom: 1px solid #aaa;
}
.menu button { border: 0; background: none; padding-right: 20px; white-space: nowrap; }
.menu .drop { padding-right: 12px; }

.toolbar {
  height: 29px;
  padding: 0 1px;
  display: flex;
  align-items: center;
  border-bottom: 1px solid #aaa;
}
.group { display: flex; justify-content: space-between; }
.group-edit { width: 237px; }
.group-arrange { width: 185px; }
.group-rotate { width: 150px; }
.group-view { width: 94px; }
.group-objects { width: 388px; }
.pair { display: flex; gap: 1px; }
.divider { width: 1px; height: 18px; margin: 0 5px; background: #ccc; }
.tool {
  width: 20px;
  height: 22px;
  border: 1px solid #aaa;
  background: #fff;
  display: grid;
  place-items: center;
}
.off { opacity: .3; }
.rotate {
  width: 52px;
  height: 22px;
  padding: 0 4px 0 2px;
  display: flex;
  align-items: center;
  justify-content: space-between;
  border: 1px solid #aaa;
}
.rotate input { width: 21px; height: 13px; border: 1px solid #777; background: #fff; font-size: 9px; }
.three { font-size: 11px; color: #000; }
.library {
  width: 81px;
  padding: 0 4px 0 2px;
  display: flex;
  align-items: center;
  justify-content: space-between;
  font: 8px/12px "DejaVu Sans", sans-serif;
}

.workspace { flex: 1; min-height: 0; display: flex; margin-bottom: 16px; }
.tools {
  width: 65px;
  padding: 6px 17px 0 4px;
  border-bottom: 1px solid #aaa;
}
.tool-grid {
  height: 315px;
  display: grid;
  grid-template-columns: 20px 20px;
  grid-auto-rows: 20px;
  column-gap: 4px;
  align-content: space-between;
}
.tools .tool { height: 20px; }
.tools .selected { background: #b0c4de; }
.text-tool { font: bold 16px/18px "Liberation Serif", serif; color: #000; }
.drawing { flex: 1; min-width: 0; display: flex; flex-direction: column; }
.ruler-top { display: flex; height: 12px; background: #666; }
.unit { width: 12px; color: #fff; font: bold 8px/11px "Liberation Sans", sans-serif; }
#ruler-x { flex: 1; min-width: 0; height: 12px; }
.sheet-row { flex: 1; min-height: 0; display: flex; }
#ruler-y { width: 12px; height: 100%; background: #666; }
#ruler-x path, #ruler-y path { stroke: #ddd; fill: none; }
#ruler-x text, #ruler-y text {
  fill: #fff;
  font: bold 6px "Liberation Sans", sans-serif;
  text-anchor: middle;
}
.sheet { flex: 1; min-width: 0; height: 100%; }
.shapes { fill: none; stroke: #000; stroke-width: 3; stroke-linecap: round; }
.solid { fill: #000; stroke: none; }

.side { width: 149px; border-left: 1px solid #999; }
.panel {
  padding: 4px 11px 11px 4px;
  border-left: 1px solid #ddd;
  border-bottom: 2px solid #ccc;
}
.modes { display: flex; gap: 2px; }
.modes button {
  width: 65px;
  height: 19px;
  display: flex;
  align-items: center;
  justify-content: center;
  gap: 9px;
  background: #efefef;
  border: 1px solid #bbb;
}
.modes .selected { background: #b0c4de; }
.mode-chip { width: 13px; height: 13px; }
.swatches {
  width: 136px;
  margin-top: 4px;
  display: grid;
  grid-template-columns: repeat(12, 1fr);
  grid-auto-rows: 9px;
  gap: 1px;
}
.swatches button { padding: 0; border: 1px solid #444; }
.swatches .none { background: #fff; border-color: #999; }
.more { margin-top: 7px; padding-bottom: 3px; display: flex; gap: 8px; }
.more-button {
  width: 80px;
  height: 22px;
  padding: 0 4px 0 3px;
  display: flex;
  align-items: center;
  justify-content: space-between;
  background: #efefef;
  border: 1px solid #bbb;
  white-space: nowrap;
}
.wheel {
  width: 16px;
  height: 16px;
  border: 1px solid #888;
  border-radius: 50%;
  background: radial-gradient(#fff, #fff0 70%), conic-gradient(#f55, #f5f, #55f, #5ff, #5f5, #ff5, #f55);
}
.picker { width: 20px; height: 22px; border: 1px solid #aaa; background: #fff; display: grid; place-items: center; }
.panel > label, .style-title { display: block; margin: 4px 0 0 3px; }
.slider { height: 17px; margin: 3px 0 0 3px; display: flex; align-items: center; }
.step {
  width: 14px;
  height: 14px;
  border: 1px solid #bbb;
  border-radius: 50%;
  background: #f3f3f3;
  display: grid;
  place-items: center;
}
.step svg { width: 6px; height: 6px; }
.slider input {
  appearance: none;
  width: 84px;
  height: 14px;
  margin: 0 1px 0 6px;
  background: none;
}
.slider input::-webkit-slider-runnable-track { height: 6px; border-radius: 3px; }
.full::-webkit-slider-runnable-track { background: #0c78b4; }
.low::-webkit-slider-runnable-track { background: linear-gradient(90deg, #0c78b4 10px, #eee 10px 77px, transparent 77px); }
.slider input::-webkit-slider-thumb {
  appearance: none;
  width: 12px;
  height: 12px;
  margin-top: -3px;
  border: 1px solid #bbb;
  border-radius: 50%;
  background: #f3f3f3;
}
.radios { margin: 1px 0 0 4px; display: flex; gap: 14px; font: 9px/12px "DejaVu Sans", sans-serif; }
.radios label { display: flex; align-items: center; gap: 3px; }
.radios input {
  appearance: none;
  width: 10px;
  height: 10px;
  border: 1px solid #aaa;
  border-radius: 50%;
  background: #f7f7f7;
}
.radios input:checked { background: radial-gradient(#444 0 2px, #eee 3px); }

.taskbar {
  height: 27px;
  display: flex;
  background: linear-gradient(90deg, #20383f, #1f3540 50%, #182b48);
  color: #fff;
  font: 8px/10px "Liberation Sans", sans-serif;
}
.start { width: 31px; }
.search {
  width: 229px;
  padding-left: 8px;
  display: flex;
  align-items: center;
  gap: 7px;
  background: #f1f1f1;
  border: 1px solid #ccc;
  border-left: 0;
}
.search input { flex: 1; min-width: 0; border: 0; background: none; font: 9px/14px "Open Sans", sans-serif; color: #333; }
.search input::placeholder { color: #333; opacity: 1; }
.apps { width: 721px; display: flex; }
.app {
  flex: 1;
  border: 0;
  border-bottom: 2px solid transparent;
  background: none;
  display: grid;
  place-items: center;
  padding-top: 2px;
}
.app.open { border-image: linear-gradient(90deg, transparent 3px, #76b9ed 3px calc(100% - 3px), transparent calc(100% - 3px)) 2; }
.app.current { background: linear-gradient(#0000 10px, #4b606e 10px) padding-box; }
.app.current-edge { background: linear-gradient(#0000 20px, #4b606e 20px) padding-box; }
.logo {
  width: 16px;
  height: 16px;
  display: grid;
  place-items: center;
  border-radius: 2px;
  color: #fff;
  font: bold 8px/16px "Liberation Sans", sans-serif;
}
.logo b { width: 10px; height: 10px; line-height: 10px; font-size: 7px; justify-self: start; }
.ps { background: #001e36; color: #31a8ff; }
.word { background: linear-gradient(#41a5ee 30%, #2b7cd3 30% 60%, #185abd 60%); }
.word b { background: #185abd; }
.excel { background: linear-gradient(#33c481 30%, #21a366 30% 60%, #185c37 60%); }
.excel b { background: #107c41; }
.ppt { background: #d9644a; border-radius: 50%; }
.ppt b { background: #c43e1c; }
.fz { background: #b00f12; font-size: 11px; font-style: italic; }
.snag { background: #e84f4a; font-size: 15px; }
.snag-blue { background: #3b83bd; font-size: 15px; }
.cam { background: #4aa51c; font-size: 15px; }
.tray { flex: 1; display: flex; align-items: center; justify-content: flex-end; gap: 4px; }
.tray .temp { margin-right: 5px; font-size: 9px; }
.clock { width: 44px; display: flex; flex-direction: column; text-align: center; white-space: nowrap; }
.notes {
  width: 31px;
  height: 100%;
  margin-right: 3px;
  padding-left: 5px;
  justify-items: start;
  border-right: 1px solid #68778a;
  position: relative;
}
.count {
  position: absolute;
  right: 8px;
  bottom: 3px;
  width: 10px;
  height: 10px;
  border: 1px solid #889;
  border-radius: 50%;
  background: #263449;
  line-height: 8px;
}
```
